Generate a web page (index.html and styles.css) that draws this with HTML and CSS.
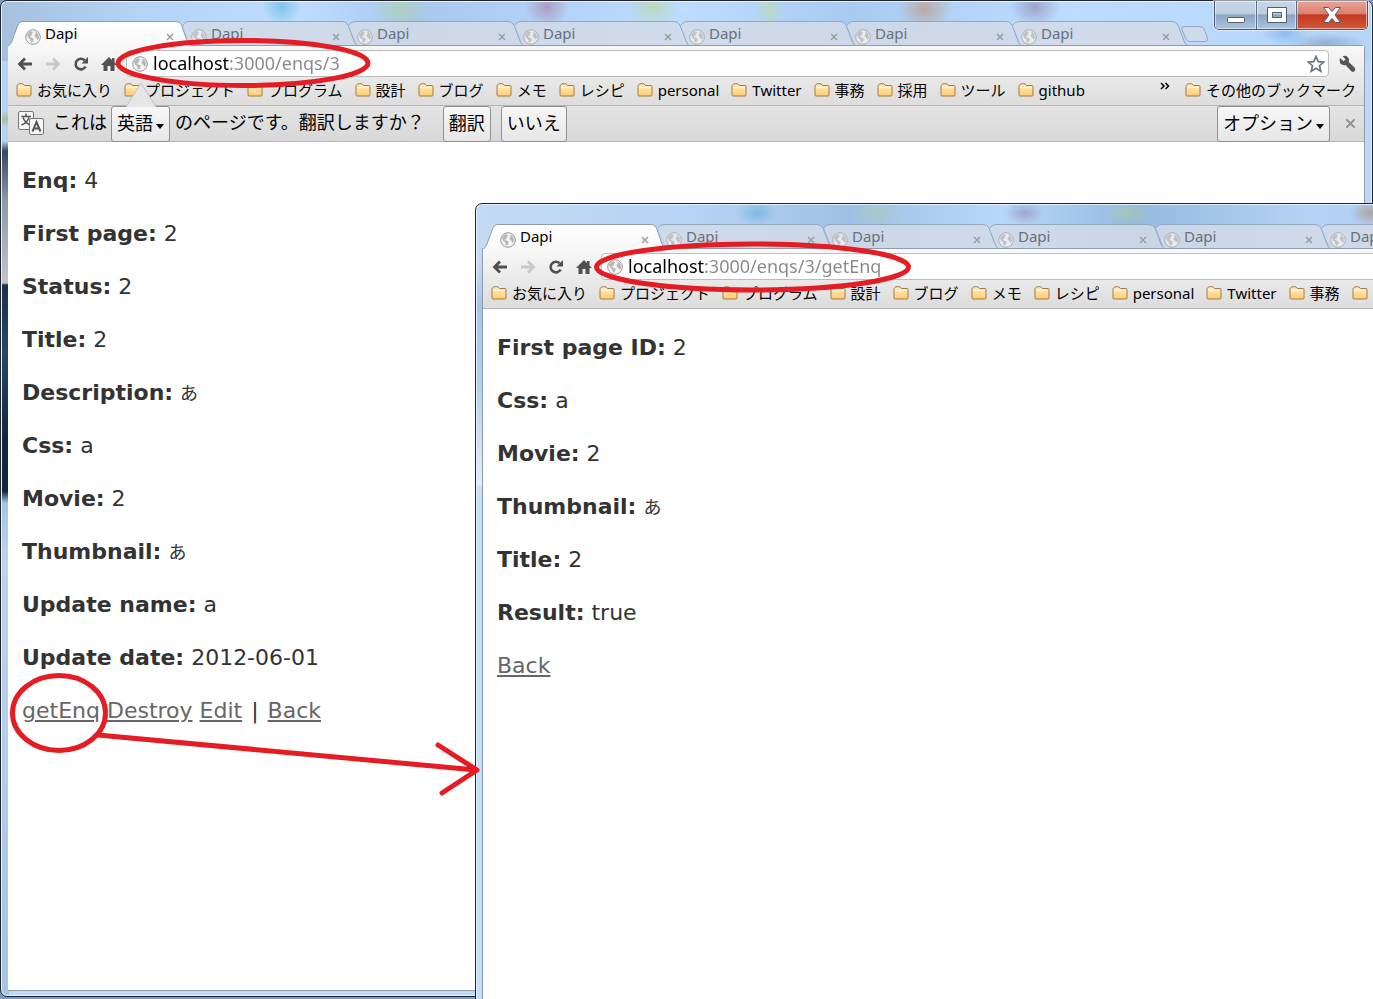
FILE: index.html
```html
<!DOCTYPE html>
<html lang="ja">
<head>
<meta charset="utf-8">
<title>Dapi</title>
<link rel="stylesheet" href="styles.css">
</head>
<body>
<svg class="defs" aria-hidden="true">
  <defs>
    <linearGradient id="folder-fill" x1="0" y1="0" x2="0" y2="1"><stop offset="0" stop-color="#fff0c4"/><stop offset="1" stop-color="#ffcb72"/></linearGradient>
    <linearGradient id="tab-on" x1="0" y1="0" x2="0" y2="1"><stop offset="0" stop-color="#fff"/><stop offset="1" stop-color="#f8f8f8"/></linearGradient>
    <symbol id="globe" viewBox="0 0 16 16"><circle cx="8" cy="8" r="7.3" fill="#f3f3f3" stroke="#9a9a9a"/><path d="M2 5.5 4.5 2.6 7 2.2 8 4 6.5 5 6.8 6.6 5 7.2 6 8.6 8.6 9.6 8.4 11.6 7 13.8 5.6 12.8 5 10 3 8.6ZM9.5 2.2 12 3.4 13.6 5.6 14 9 12.6 11 11.4 8.8 10 8 9.6 6 11 4.6Z" fill="#b8b8b8"/></symbol>
    <symbol id="folder" viewBox="0 0 16 14"><path d="M1 12V3.2Q1 2 2 1.5L3 .8H7L8.4 2.5H14Q15 2.5 15 3.5V12Q15 13 14 13H2Q1 13 1 12Z" fill="url(#folder-fill)" stroke="#a47b42"/><path d="M2 4.5H14" stroke="#fff6da"/></symbol>
    <symbol id="x" viewBox="0 0 8 8"><path d="M1 1 7 7M7 1 1 7" fill="none" stroke="currentColor" stroke-width="1.4"/></symbol>
    <symbol id="tab-active" viewBox="0 0 184 25"><path d="M0 25Q3 23 4 20L9.500 5Q11 .5 15 .5H168Q172 .5 173.500 4L179 20Q180 24 184 25Z" fill="url(#tab-on)"/><path d="M.5 25Q3 23 4 20L9.500 5Q11 .5 15 .5H168Q172 .5 173.500 4L179 20Q180 24 184 24.500" fill="none" stroke="#8d9cac"/></symbol>
    <symbol id="tab-rest" viewBox="0 0 184 25"><path d="M17 24 9 4Q11 .5 15 .5H168Q172 .5 174 4L180 20 184 24H17Z" fill="#d2dbe6" fill-opacity=".85"/><path d="M9 4Q11 .5 15 .5H168Q172 .5 174 4L180 20Q181 24 184 24.500" fill="none" stroke="#94a8bd"/></symbol>
    <symbol id="back" viewBox="0 0 16 14"><path d="M8 1.500 2.500 7 8 12.500M2.500 7H15" fill="none" stroke="currentColor" stroke-width="2.800"/></symbol>
    <symbol id="reload" viewBox="0 0 16 16"><path d="M12.600 10.500A5.300 5.300 0 1 1 11.600 4.200" fill="none" stroke="currentColor" stroke-width="2.600"/><path d="M15 1V7.500H8.500Z" fill="currentColor"/></symbol>
    <symbol id="home" viewBox="0 0 16 16"><path d="M8 1 0 9H2.500V15H6.500V10H9.500V15H13.500V9H16L13.500 6.400V2H11V4Z" fill="currentColor"/></symbol>
  </defs>
</svg>

<main class="desktop">
  <section class="window window-main" aria-label="localhost:3000/enqs/3">
    <header class="titlebar">
      <nav class="tabs">
        <a class="tab active" href="#"><svg class="shape"><use href="#tab-active"/></svg><svg class="globe"><use href="#globe"/></svg><span>Dapi</span><svg class="close"><use href="#x"/></svg></a>
        <a class="tab" href="#"><svg class="shape"><use href="#tab-rest"/></svg><svg class="globe"><use href="#globe"/></svg><span>Dapi</span><svg class="close"><use href="#x"/></svg></a>
        <a class="tab" href="#"><svg class="shape"><use href="#tab-rest"/></svg><svg class="globe"><use href="#globe"/></svg><span>Dapi</span><svg class="close"><use href="#x"/></svg></a>
        <a class="tab" href="#"><svg class="shape"><use href="#tab-rest"/></svg><svg class="globe"><use href="#globe"/></svg><span>Dapi</span><svg class="close"><use href="#x"/></svg></a>
        <a class="tab" href="#"><svg class="shape"><use href="#tab-rest"/></svg><svg class="globe"><use href="#globe"/></svg><span>Dapi</span><svg class="close"><use href="#x"/></svg></a>
        <a class="tab" href="#"><svg class="shape"><use href="#tab-rest"/></svg><svg class="globe"><use href="#globe"/></svg><span>Dapi</span><svg class="close"><use href="#x"/></svg></a>
        <a class="tab" href="#"><svg class="shape"><use href="#tab-rest"/></svg><svg class="globe"><use href="#globe"/></svg><span>Dapi</span><svg class="close"><use href="#x"/></svg></a>
        <button class="new-tab" aria-label="新しいタブ"><svg viewBox="0 0 28 16"><path d="M3 .5H19Q22 .5 23.500 4L26.500 12Q27 15.500 24 15.500H9Q6 15.500 5 13L1 4Q0 .5 3 .5Z" fill="#d2dbe6" fill-opacity=".8" stroke="#94a8bd"/></svg></button>
      </nav>
      <div class="caption-buttons">
        <button class="minimize" aria-label="最小化"><svg viewBox="0 0 20 20"><rect x="1.500" y="12.500" width="17" height="5" rx="1" fill="#fff" stroke="#565d6c"/></svg></button>
        <button class="maximize" aria-label="最大化"><svg viewBox="0 0 20 20"><path d="M.5 2.500H19.500V17.500H.5ZM5.500 7.500V12.500H14.500V7.500Z" fill="#fff" fill-rule="evenodd" stroke="#565d6c"/></svg></button>
        <button class="shut" aria-label="閉じる"><svg viewBox="0 0 20 20"><path d="M1.500 2.500H6.500L10 6.500 13.500 2.500H18.500L13 10 18.500 17.500H13.500L10 13.500 6.500 17.500H1.500L7 10Z" fill="#fff" stroke="#565d6c"/></svg></button>
      </div>
    </header>
    <div class="client">
      <div class="chrome">
        <div class="toolbar">
          <button aria-label="戻る"><svg class="arrow"><use href="#back"/></svg></button>
          <button class="off" aria-label="進む"><svg class="arrow flip"><use href="#back"/></svg></button>
          <button aria-label="更新"><svg><use href="#reload"/></svg></button>
          <button aria-label="ホーム"><svg><use href="#home"/></svg></button>
          <label class="omnibox"><svg class="site"><use href="#globe"/></svg><input type="text" aria-label="アドレス" value="localhost:3000/enqs/3"><svg class="star" viewBox="0 0 18 18"><path d="M9 1.500 11.200 6.600 16.700 7.100 12.500 10.700 13.800 16.200 9 13.300 4.200 16.200 5.500 10.700 1.300 7.100 6.800 6.600Z" fill="#fff" stroke="#68748e" stroke-width="1.700"/></svg></label>
          <button class="wrench" aria-label="設定"><svg viewBox="0 0 18 18"><path d="M2 3 5.500 6.300 7.600 4.500 4.600 1.200Q8.500 0 10.500 3 11.500 5 10.700 7L17 13Q17.800 15 16.500 16.300 15 17.500 13.500 16.500L7.500 10Q4.500 10.700 2.500 8.700.8 6.500 2 3Z" fill="#555"/></svg></button>
        </div>
        <nav class="bookmarks">
          <a href="#"><svg><use href="#folder"/></svg>お気に入り</a>
          <a href="#"><svg><use href="#folder"/></svg>プロジェクト</a>
          <a href="#"><svg><use href="#folder"/></svg>プログラム</a>
          <a href="#"><svg><use href="#folder"/></svg>設計</a>
          <a href="#"><svg><use href="#folder"/></svg>ブログ</a>
          <a href="#"><svg><use href="#folder"/></svg>メモ</a>
          <a href="#"><svg><use href="#folder"/></svg>レシピ</a>
          <a href="#"><svg><use href="#folder"/></svg>personal</a>
          <a href="#"><svg><use href="#folder"/></svg>Twitter</a>
          <a href="#"><svg><use href="#folder"/></svg>事務</a>
          <a href="#"><svg><use href="#folder"/></svg>採用</a>
          <a href="#"><svg><use href="#folder"/></svg>ツール</a>
          <a href="#"><svg><use href="#folder"/></svg>github</a>
          <button class="more" aria-label="その他"><svg viewBox="0 0 10 8"><path d="M1 1 4 4 1 7M5.500 1 8.500 4 5.500 7" fill="none" stroke="#000" stroke-width="1.500"/></svg></button>
          <a class="others" href="#"><svg><use href="#folder"/></svg>その他のブックマーク</a>
        </nav>
      </div>
      <div class="infobar">
        <svg class="pointer" viewBox="0 0 30 25"><path d="M0 25 15 1 30 25Z" fill="#e6e6e6"/><path d="M0 25 15 1 30 25" fill="none" stroke="#c2c2c2"/></svg>
        <svg class="translate" viewBox="0 0 28 26"><rect x="1.500" y="1.500" width="15" height="18" rx="1.500" fill="#f6f6f6" stroke="#777"/><path d="M9 3.500V6M4.500 6.500H14M6 7.500Q8 13 13.500 15M12 7.500Q10 13 4.500 15" fill="none" stroke="#555" stroke-width="1.500"/><rect x="12.500" y="8.500" width="14" height="16" rx="1.500" fill="#f6f6f6" stroke="#777"/><path d="M15.500 21.500 19.500 12 23.500 21.500M17 18.500H22" fill="none" stroke="#555" stroke-width="2"/></svg>
        <label for="language">これは</label>
        <span class="picker"><select id="language"><option>英語</option></select><svg class="caret" viewBox="0 0 8 5"><path d="M0 0H8L4 5Z"/></svg></span>
        <span class="question">のページです。翻訳しますか？</span>
        <button class="bar-button">翻訳</button>
        <button class="bar-button">いいえ</button>
        <button class="bar-button options">オプション<svg class="caret" viewBox="0 0 8 5"><path d="M0 0H8L4 5Z"/></svg></button>
        <button class="dismiss" aria-label="閉じる"><svg><use href="#x"/></svg></button>
      </div>
      <article class="page">
        <p><b>Enq:</b> 4</p>
        <p><b>First page:</b> 2</p>
        <p><b>Status:</b> 2</p>
        <p><b>Title:</b> 2</p>
        <p><b>Description:</b> <span class="kana">あ</span></p>
        <p><b>Css:</b> a</p>
        <p><b>Movie:</b> 2</p>
        <p><b>Thumbnail:</b> <span class="kana">あ</span></p>
        <p><b>Update name:</b> a</p>
        <p><b>Update date:</b> 2012-06-01</p>
        <p><a href="#">getEnq</a> <a href="#">Destroy</a> <a href="#">Edit</a> <span class="bar">|</span> <a href="#">Back</a></p>
      </article>
    </div>
  </section>

  <section class="window window-front" aria-label="localhost:3000/enqs/3/getEnq">
    <header class="titlebar">
      <nav class="tabs">
        <a class="tab active" href="#"><svg class="shape"><use href="#tab-active"/></svg><svg class="globe"><use href="#globe"/></svg><span>Dapi</span><svg class="close"><use href="#x"/></svg></a>
        <a class="tab" href="#"><svg class="shape"><use href="#tab-rest"/></svg><svg class="globe"><use href="#globe"/></svg><span>Dapi</span><svg class="close"><use href="#x"/></svg></a>
        <a class="tab" href="#"><svg class="shape"><use href="#tab-rest"/></svg><svg class="globe"><use href="#globe"/></svg><span>Dapi</span><svg class="close"><use href="#x"/></svg></a>
        <a class="tab" href="#"><svg class="shape"><use href="#tab-rest"/></svg><svg class="globe"><use href="#globe"/></svg><span>Dapi</span><svg class="close"><use href="#x"/></svg></a>
        <a class="tab" href="#"><svg class="shape"><use href="#tab-rest"/></svg><svg class="globe"><use href="#globe"/></svg><span>Dapi</span><svg class="close"><use href="#x"/></svg></a>
        <a class="tab" href="#"><svg class="shape"><use href="#tab-rest"/></svg><svg class="globe"><use href="#globe"/></svg><span>Dapi</span><svg class="close"><use href="#x"/></svg></a>
      </nav>
    </header>
    <div class="client">
      <div class="chrome">
        <div class="toolbar">
          <button aria-label="戻る"><svg class="arrow"><use href="#back"/></svg></button>
          <button class="off" aria-label="進む"><svg class="arrow flip"><use href="#back"/></svg></button>
          <button aria-label="更新"><svg><use href="#reload"/></svg></button>
          <button aria-label="ホーム"><svg><use href="#home"/></svg></button>
          <label class="omnibox"><svg class="site"><use href="#globe"/></svg><input type="text" aria-label="アドレス" value="localhost:3000/enqs/3/getEnq"></label>
        </div>
        <nav class="bookmarks">
          <a href="#"><svg><use href="#folder"/></svg>お気に入り</a>
          <a href="#"><svg><use href="#folder"/></svg>プロジェクト</a>
          <a href="#"><svg><use href="#folder"/></svg>プログラム</a>
          <a href="#"><svg><use href="#folder"/></svg>設計</a>
          <a href="#"><svg><use href="#folder"/></svg>ブログ</a>
          <a href="#"><svg><use href="#folder"/></svg>メモ</a>
          <a href="#"><svg><use href="#folder"/></svg>レシピ</a>
          <a href="#"><svg><use href="#folder"/></svg>personal</a>
          <a href="#"><svg><use href="#folder"/></svg>Twitter</a>
          <a href="#"><svg><use href="#folder"/></svg>事務</a>
          <a href="#" aria-label="フォルダ"><svg><use href="#folder"/></svg></a>
        </nav>
      </div>
      <article class="page">
        <p><b>First page ID:</b> 2</p>
        <p><b>Css:</b> a</p>
        <p><b>Movie:</b> 2</p>
        <p><b>Thumbnail:</b> <span class="kana">あ</span></p>
        <p><b>Title:</b> 2</p>
        <p><b>Result:</b> true</p>
        <p><a href="#">Back</a></p>
      </article>
    </div>
  </section>

  <svg class="marks" aria-hidden="true">
    <ellipse cx="243" cy="63" rx="125" ry="22.500"/>
    <ellipse cx="752.500" cy="267" rx="156" ry="23"/>
    <ellipse cx="59" cy="713" rx="46.500" ry="37.500"/>
    <path d="M98 735 476 770M438 745 477 770 442 793"/>
  </svg>
</main>
</body>
</html>
```
FILE: styles.css
```css
* { box-sizing: border-box; }
html, body { height: 100%; }
body {
  margin: 0;
  overflow: hidden;
  font-family: "Noto Sans", "Noto Sans CJK JP", sans-serif;
  font-size: 15px;
  color: #000;
}
svg { display: block; flex: none; }
a { color: inherit; text-decoration: none; }
button { padding: 0; border: 0; background: none; font: inherit; color: inherit; }
.defs { position: absolute; width: 0; height: 0; }

.desktop { position: relative; height: 100%; overflow: hidden; background: #7d9ac0; }

/* windows placed on the desktop */
.window {
  position: absolute;
  isolation: isolate;
  display: flex;
  flex-direction: column;
  border: 1px solid #20242c;
  border-radius: 7px;
  padding: 0 7px 5px;
  box-shadow: inset 0 0 0 1px #e4f1ff;
}
.window-main {
  inset: 0 0 2px;
  background:
    radial-gradient(ellipse 20px 18px at 281px 6px, #48b0d688, transparent),
    radial-gradient(ellipse 30px 20px at 400px 8px, #b4d48a77, transparent),
    radial-gradient(ellipse 22px 20px at 546px 6px, #a86f9688, transparent),
    radial-gradient(ellipse 26px 20px at 652px 6px, #bcd68488, transparent),
    radial-gradient(ellipse 14px 20px at 768px 8px, #c2dc9088, transparent),
    radial-gradient(ellipse 28px 22px at 924px 8px, #c48a6088, transparent),
    radial-gradient(ellipse 26px 20px at 1034px 6px, #7a6a9477, transparent),
    radial-gradient(ellipse 24px 12px at 1284px 32px, #5a9be077, transparent),
    radial-gradient(ellipse 40px 10px at 1325px 42px, #6884a077, transparent),
    linear-gradient(90deg, #a6c0de, #b5d3f5 10%, #bddcff 22%, #a8c8ec 30%, #bddcff 50%, #a9cbf0 62%, #bddcff 78%, #b5d5f8) 0 0 / 100% 60px no-repeat,
    linear-gradient(#b5d3f5 60px, #b5d3f5 110px, #a3c293 118px, #b5d3f5 126px, #b5d3f5 140px, #34495f 150px, #8c9aaa 200px, #c3c5cb 282px, #18304c 284px, #284868 350px, #0f2742 440px, #10283f 490px, #a6c4e8 502px, #bcd4ee 560px, #a6c4e8) 0 0 / 8px 100% no-repeat,
    #bfd8f5;
}
.window-front {
  inset: 203px -200px -12px 475px;
  padding-left: 6px;
  background:
    radial-gradient(ellipse 20px 12px at 281px 9px, #48a6d677, transparent),
    radial-gradient(ellipse 28px 12px at 400px 9px, #a9cf9a77, transparent),
    radial-gradient(ellipse 20px 12px at 548px 9px, #8d759d77, transparent),
    radial-gradient(ellipse 24px 12px at 652px 9px, #b4d48a77, transparent),
    radial-gradient(ellipse 20px 14px at 894px 9px, #ae8a6e99, transparent),
    linear-gradient(90deg, #c4daf2, #b5d3f5 20%, #9fc0e4 34%, #b8d8fb 48%, #95b9e0 60%, #b5d3f5 76%, #9fc4f0) 0 0 / 100% 60px no-repeat,
    linear-gradient(#c4daf2 60px, #a9c5e4 100px, #b5cfea 180px, #e0eefc 280px, #c6e0fb 284px);
}

.titlebar { display: flex; height: 44px; padding-top: 20px; }
.tabs { display: flex; flex: 1; min-width: 0; height: 25px; }
.window-front .tabs { padding-left: 1px; }
.tab {
  position: relative;
  display: flex;
  flex: 0 0 166px;
  gap: 4px;
  padding: 2px 0 0 17px;
  line-height: 22px;
  color: #66717d;
}
.tab.active { color: #000; z-index: 1; }
.tab .shape { position: absolute; left: 0; top: 0; width: 184px; height: 25px; }
.tab .globe { position: relative; width: 16px; height: 16px; margin-top: 6px; }
.tab:not(.active) .globe { opacity: .7; }
.tab span { position: relative; flex: 1; margin-top: -1px; }
.tab .close { position: relative; width: 8px; height: 8px; margin-top: 10px; color: #999; }
.new-tab { width: 28px; height: 16px; margin: 5px 0 0 11px; }
.new-tab svg { width: 28px; height: 16px; }

.caption-buttons {
  position: absolute;
  right: 4px;
  top: 0;
  display: flex;
  height: 29px;
  border: 1px solid #47566c;
  border-top: 0;
  border-radius: 0 0 5px 5px;
  overflow: hidden;
  box-shadow: 0 0 0 1px #ffffff88;
}
.caption-buttons button {
  display: grid;
  place-items: center;
  width: 42px;
  border-right: 1px solid #5a6b83;
  box-shadow: inset 0 0 0 1px #ffffff88;
  background: linear-gradient(#c6d6e8, #bccde1 45%, #8ba5c1 50%, #a9c5e2);
}
.caption-buttons svg { width: 20px; height: 20px; }
.caption-buttons .maximize { width: 40px; }
.caption-buttons .shut { width: 70px; border-right: 0; background: linear-gradient(#e8a498, #dd8070 45%, #c23a20 50%, #d4583a); }

.client {
  display: flex;
  flex: 1;
  flex-direction: column;
  min-height: 0;
  border: 1px solid #8d9cac;
  border-left: 0;
  border-radius: 0 4px 0 0;
  background: #fff;
}
.window-front .client { border-left: 1px solid #8d9cac; }
.chrome { background: linear-gradient(#f8f8f8, #dedede 55px); }
.toolbar { display: flex; align-items: center; gap: 12px; height: 32px; padding: 3px 8px 0 9px; }
.toolbar button { color: #505050; }
.toolbar button.off { color: #c8c8c8; }
.toolbar svg { width: 16px; height: 16px; }
.toolbar svg.arrow { height: 14px; }
.flip { transform: scaleX(-1); }
.omnibox {
  display: flex;
  flex: 1;
  align-items: center;
  gap: 5px;
  height: 27px;
  margin: 0 -3px;
  padding: 0 3px 0 5px;
  border: 1px solid #bdbdbd;
  border-radius: 4px;
  background: #fff;
}
.omnibox input {
  flex: 1;
  min-width: 0;
  height: 25px;
  padding: 0 0 2px;
  border: 0;
  outline: 0;
  font: inherit;
  font-size: 18px;
  color: transparent;
  background: linear-gradient(90deg, #000 76px, #888 76px);
  background-clip: text;
}
.omnibox .star { width: 18px; height: 18px; }
.wrench svg { width: 18px; height: 18px; }

.bookmarks {
  display: flex;
  align-items: center;
  gap: 12px;
  height: 28px;
  padding: 0 8px 4px;
  border-bottom: 1px solid #b4b4b4;
  white-space: nowrap;
  line-height: 22px;
}
.bookmarks a { display: flex; align-items: center; gap: 5px; }
.bookmarks a svg { width: 16px; height: 14px; }
.bookmarks .more { margin-left: auto; padding-bottom: 8px; }
.more svg { width: 10px; height: 8px; }
.bookmarks .others { margin-left: 3px; }

.infobar {
  position: relative;
  display: flex;
  height: 36px;
  padding: 0 8px 0 9px;
  border-bottom: 1px solid #b4b4b4;
  background: linear-gradient(#e4e4e4, #d8d8d8);
  font-size: 18px;
  line-height: 32px;
  white-space: nowrap;
}
.pointer { position: absolute; left: 118px; top: -24px; width: 30px; height: 25px; }
.translate { width: 28px; height: 26px; margin: 4px 8px 0 0; }
.picker, .bar-button {
  display: flex;
  align-items: center;
  gap: 3px;
  height: 36px;
  padding: 0 5px 2px;
  border: 1px solid #909090;
  border-radius: 3px;
  background: linear-gradient(#f7f7f7, #e6e6e6);
}
.picker { margin: 0 5px 0 4px; }
.picker select { appearance: none; padding: 0; border: 0; background: none; font: inherit; color: inherit; }
.caret { width: 8px; height: 5px; margin-top: 6px; }
.question { margin-right: 18px; }
.bar-button + .bar-button { margin-left: 10px; }
.infobar .options { margin-left: auto; }
.dismiss { margin-left: 15px; color: #8f8f8f; }
.dismiss svg { width: 11px; height: 11px; }

.page {
  flex: 1;
  padding: 24px 14px;
  font-family: "DejaVu Sans", "Noto Sans CJK JP", sans-serif;
  font-size: 22px;
  line-height: 30px;
  color: #333;
}
.page p { margin: 0 0 23px; }
.page a { color: #666; text-decoration: underline; }
.page .bar { margin: 0 2px; }
.kana { font-size: 18px; line-height: 1; }

.marks {
  position: absolute;
  inset: 0;
  width: 100%;
  height: 100%;
  pointer-events: none;
  fill: none;
  stroke: #e51c23;
  stroke-width: 5;
  stroke-linecap: round;
  stroke-linejoin: round;
}
```
